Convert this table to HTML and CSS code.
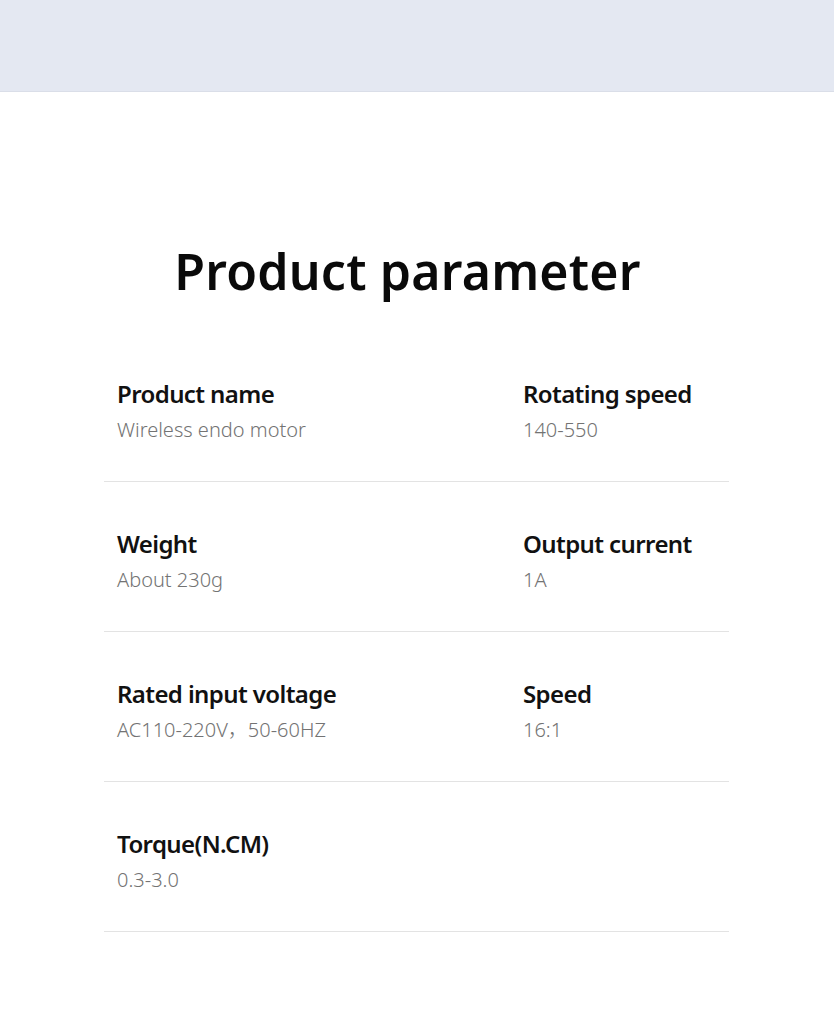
FILE: index.html
```html
<!DOCTYPE html>
<html>
<head>
<meta charset="utf-8">
<link rel="stylesheet" href="styles.css">
</head>
<body>
<div class="band"></div>
<main class="content">
  <h1 class="title">Product parameter</h1>
  <div class="table">
    <div class="row">
      <div class="cell"><div class="label">Product name</div><div class="value">Wireless endo motor</div></div>
      <div class="cell"><div class="label">Rotating speed</div><div class="value">140-550</div></div>
    </div>
    <div class="row">
      <div class="cell"><div class="label">Weight</div><div class="value">About 230g</div></div>
      <div class="cell"><div class="label">Output current</div><div class="value">1A</div></div>
    </div>
    <div class="row">
      <div class="cell"><div class="label">Rated input voltage</div><div class="value">AC110-220V，50-60HZ</div></div>
      <div class="cell"><div class="label">Speed</div><div class="value">16:1</div></div>
    </div>
    <div class="row">
      <div class="cell"><div class="label">Torque(N.CM)</div><div class="value">0.3-3.0</div></div>
      <div class="cell"></div>
    </div>
  </div>
</main>
</body>
</html>
```
FILE: styles.css
```css
* { box-sizing: border-box; }
html, body { margin: 0; padding: 0; background: #ffffff; }
body { font-family: "Noto Sans", "Noto Sans CJK SC", sans-serif; width: 834px; height: 1024px; overflow: hidden; }
.band { height: 92px; background: #e4e8f2; border-bottom: 1px solid #dadee8; }
.content { padding: 0 105px 0 104px; }
.title { margin: 0; padding-top: 144px; padding-right: 18px; text-align: center; font-size: 50px; font-weight: 600; color: #0a0a0a; line-height: 70px; letter-spacing: 0.2px; }
.table { margin-top: 26px; }
.row { display: grid; grid-template-columns: 406px 1fr; border-bottom: 1px solid #e3e3e3; height: 150px; padding-top: 45px; }
.cell { padding-left: 13px; }
.label { font-size: 24px; font-weight: 600; color: #111; line-height: 34px; letter-spacing: -0.6px; }
.value { font-size: 20px; font-weight: 300; color: #737373; line-height: 34px; margin-top: 2px; }
```
